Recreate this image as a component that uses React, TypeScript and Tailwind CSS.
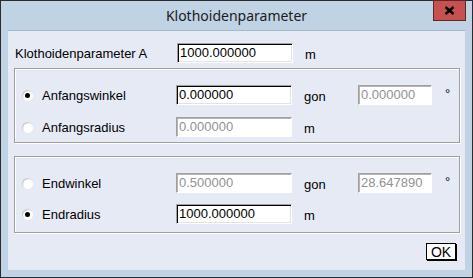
import React from "react";

type FieldProps = { value: string; disabled?: boolean; w?: string };

const Field = ({ value, disabled, w = "w-[116px]" }: FieldProps) => {
  return (
    <div
      className={
        w +
        " h-[20px] flex items-center bg-white pl-[2px] border border-t-[#a0a0a0] border-l-[#a0a0a0] border-r-white border-b-white " +
        (disabled
          ? "text-[#929292] shadow-[inset_1px_1px_0_#b4b4b4]"
          : "text-black shadow-[inset_1px_1px_0_#000,inset_-1px_-1px_0_#e3e3e3]")
      }
    >
      {value}
    </div>
  );
};

const Radio = ({ checked }: { checked?: boolean }) => {
  return (
    <div className="w-[11px] h-[11px] rounded-full bg-white shadow-[inset_1px_1px_1px_#c4c4c4] flex items-center justify-center">
      {checked && <div className="w-[5px] h-[5px] rounded-full bg-black" />}
    </div>
  );
};

type RowProps = {
  label: string;
  checked?: boolean;
  value: string;
  disabled?: boolean;
  unit: string;
  extra?: string;
};

const Row = ({ label, checked, value, disabled, unit, extra }: RowProps) => {
  return (
    <div className="flex items-center h-[20px]">
      <div className="ml-[7px]">
        <Radio checked={checked} />
      </div>
      <div className="ml-[9px] w-[134px] pt-px">{label}</div>
      <Field value={value} disabled={disabled} />
      <div className="ml-[12px] w-[54px] pt-[3px]">{unit}</div>
      {extra !== undefined && (
        <>
          <Field value={extra} disabled w="w-[74px]" />
          <div className="ml-[13px] -mt-[2px]">°</div>
        </>
      )}
    </div>
  );
};

const App = () => {
  return (
    <div className="w-[473px] h-[278px] bg-[#2b2b2b] p-px flex font-['Liberation_Sans',Arial,sans-serif] text-[13px] text-black">
      <div className="flex-1 flex flex-col bg-[#bfd3e4]">
        <div className="relative h-[29px] flex items-center justify-center">
          <span className="font-['Segoe_UI','Noto_Sans',sans-serif] text-[14px] text-[#1b1b1b]">
            Klothoidenparameter
          </span>
          <div className="absolute right-[6px] top-[-1px] w-[33px] h-[21px] bg-[#c75050] border border-[#5a2a2a] flex items-center justify-center">
            <svg width="11" height="9" viewBox="0 0 11 9">
              <path d="M1.5 1 L9.5 8 M9.5 1 L1.5 8" stroke="#000" strokeWidth="2.4" />
            </svg>
          </div>
        </div>
        <div className="flex-1 mx-[7px] mb-[7px] bg-[#e6eaf5] border-t border-[#a7b8cb] flex flex-col px-[6px] pr-[5px]">
          <div className="flex items-center h-[20px] mt-[12px] pl-px">
            <div className="w-[162px] pt-[2px]">Klothoidenparameter A</div>
            <Field value="1000.000000" />
            <div className="ml-[12px] pt-[3px]">m</div>
          </div>
          <div className="mt-[5px] h-[75px] border border-[#a0a0a0] shadow-[inset_1px_1px_0_#fff,1px_1px_0_#fff] flex flex-col pt-[16px] gap-[12px]">
            <Row label="Anfangswinkel" checked value="0.000000" unit="gon" extra="0.000000" />
            <Row label="Anfangsradius" value="0.000000" disabled unit="m" />
          </div>
          <div className="mt-[13px] h-[77px] border border-[#a0a0a0] shadow-[inset_1px_1px_0_#fff,1px_1px_0_#fff] flex flex-col pt-[16px] gap-[11px]">
            <Row label="Endwinkel" value="0.500000" disabled unit="gon" extra="28.647890" />
            <Row label="Endradius" checked value="1000.000000" unit="m" />
          </div>
          <div className="flex justify-end mt-[10px] pr-[4px]">
            <div className="w-[30px] h-[17px] bg-white border border-black shadow-[1px_1px_0_#000] flex items-center justify-center text-[14px] leading-none">
              OK
            </div>
          </div>
        </div>
      </div>
    </div>
  );
};

export default App;
